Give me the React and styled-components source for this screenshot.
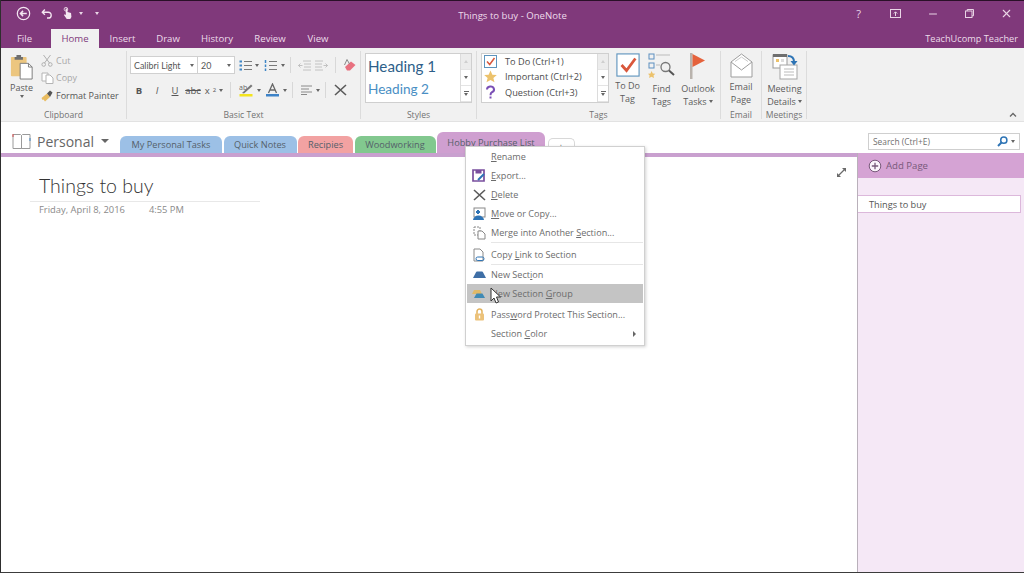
import React from 'react'
import styled, { createGlobalStyle } from 'styled-components'
import { FiX, FiMinus } from 'react-icons/fi'

const Global = createGlobalStyle`
  html, body { margin: 0; padding: 0; overflow: hidden; background: #fff; }
  * { box-sizing: border-box; }
  body { font-family: "Open Sans", "Noto Sans", sans-serif; }
`

const Win = styled.div`
  position: relative;
  width: 1024px;
  height: 573px;
  display: flex;
  flex-direction: column;
  overflow: hidden;
  border-left: 1px solid #2e2e2e;
  border-bottom: 1px solid #3c3c3c;
`

const TitleBar = styled.div`
  height: 29px;
  flex: none;
  background: #80397b;
  border-top: 1px solid #2a1028;
  color: #f1e2ef;
  display: grid;
  grid-template-columns: 1fr auto 1fr;
  align-items: center;
`
const Quick = styled.div`
  display: flex;
  align-items: center;
  padding: 0 0 3px 15px;
`
const QuickBtn = styled.span`
  display: flex;
  align-items: center;
  margin-left: ${p => p.$ml || 0}px;
`
const Title = styled.div`
  font-size: 9.6px;
  color: #eedcec;
`
const Controls = styled.div`
  display: flex;
  justify-content: flex-end;
  align-items: center;
  color: #e9d5e6;
  padding-bottom: 3px;
  margin-right: -1px;
`
const Ctl = styled.div`
  width: 37px;
  display: flex;
  justify-content: center;
  align-items: center;
  font-size: 11px;
`

const TabRow = styled.div`
  height: 19px;
  flex: none;
  background: #80397b;
  display: flex;
  align-items: stretch;
  padding-right: 6px;
`
const RTab = styled.div`
  width: ${p => p.$w}px;
  padding-right: ${p => p.$pr || 0}px;
  display: flex;
  justify-content: center;
  align-items: center;
  font-size: 9.6px;
  color: ${p => (p.$active ? '#80397b' : '#ecdcea')};
  background: ${p => (p.$active ? '#f1f1f1' : 'transparent')};
`
const Account = styled.div`
  margin-left: auto;
  font-size: 9.2px;
  display: flex;
  align-items: center;
  color: #ecdcea;
`

const Ribbon = styled.div`
  height: 74px;
  flex: none;
  background: #f1f1f1;
  border-bottom: 1px solid #e2e2e2;
  display: flex;
  color: #555;
`
const Group = styled.div`
  width: ${p => p.$w}px;
  flex: none;
  border-right: 1px solid #dcdcdc;
  margin: 3px 0 2px;
  display: flex;
  flex-direction: column;
`
const GroupBody = styled.div`
  flex: 1;
  display: flex;
  min-height: 0;
`
const GroupLabel = styled.div`
  height: 15px;
  flex: none;
  text-align: center;
  font-size: 8.6px;
  line-height: 22px;
  color: #727272;
`
const Paste = styled.div`
  width: 40px;
  flex: none;
  padding: 3px 0 0 1px;
  display: flex;
  flex-direction: column;
  align-items: center;
  gap: 1px;
  font-size: 9px;
  line-height: 12px;
  color: #5a5a5a;
`
const SmallCol = styled.div`
  display: flex;
  flex-direction: column;
  padding-top: 1px;
`
const SmallBtn = styled.div`
  height: 18px;
  display: flex;
  align-items: center;
  font-size: 9px;
  white-space: nowrap;
  color: ${p => (p.$off ? '#a8a8a8' : '#555')};
`
const SmallIcon = styled.span`
  width: 15px;
  flex: none;
  display: flex;
  align-items: center;
`
const BasicCol = styled.div`
  padding: 5px 0 0 3px;
  display: flex;
  flex-direction: column;
  gap: 7px;
`
const ToolRow = styled.div`
  display: flex;
  align-items: center;
  height: 18px;
`
const Field = styled.div`
  width: ${p => p.$w}px;
  height: 18px;
  background: #fff;
  border: 1px solid #d0d0d0;
  margin-left: ${p => (p.$joined ? '-1px' : '0')};
  display: flex;
  align-items: center;
  justify-content: space-between;
  font-size: 8.9px;
  font-family: "Lato", sans-serif;
  padding: 0 3px;
  color: #555;
`
const Caret = styled.span`
  display: inline-block;
  width: 0;
  height: 0;
  border-left: 2.5px solid transparent;
  border-right: 2.5px solid transparent;
  border-top: 3px solid ${p => p.$c || '#666'};
  flex: none;
`
const BigCaret = styled(Caret)`
  margin-left: 1px;
  border-left-width: 4px;
  border-right-width: 4px;
  border-top-width: 4px;
`
const UpCaret = styled(Caret)`
  border-top: none;
  border-bottom: 3px solid #cfcfcf;
`
const MoreCaret = styled.span`
  display: inline-block;
  width: 5px;
  height: 5px;
  border-top: 1px solid #666;
  position: relative;
  &::after {
    content: '';
    position: absolute;
    left: 0;
    top: 1px;
    border-left: 2.5px solid transparent;
    border-right: 2.5px solid transparent;
    border-top: 3px solid #666;
  }
`
const Sep = styled.div`
  width: 1px;
  height: 16px;
  background: #d8d8d8;
  margin: 0 ${p => p.$m || 5}px;
  flex: none;
`
const Tool = styled.div`
  width: ${p => p.$w || 18}px;
  height: 18px;
  flex: none;
  display: flex;
  align-items: center;
  justify-content: center;
  gap: 3px;
  font-size: 9.5px;
  color: #555;
`
const Gallery = styled.div`
  width: ${p => p.$w}px;
  height: 50px;
  margin: 2px 0 0 ${p => p.$ml}px;
  background: #fff;
  border: 1px solid #cfcfcf;
  display: flex;
`
const GalleryList = styled.div`
  flex: 1;
  display: flex;
  flex-direction: column;
  justify-content: space-around;
  padding-bottom: 2px;
`
const GalleryBtns = styled.div`
  width: 11px;
  border-left: 1px solid #dcdcdc;
  display: flex;
  flex-direction: column;
`
const GalleryBtn = styled.div`
  flex: 1;
  background: ${p => (p.$dim ? '#ececec' : '#fff')};
  border-bottom: 1px solid #e4e4e4;
  display: flex;
  align-items: center;
  justify-content: center;
`
const Heading = styled.div`
  font-family: "Lato", sans-serif;
  font-size: ${p => p.$s}px;
  color: ${p => p.$c};
  padding-left: 2px;
  line-height: 22px;
`
const TagLine = styled.div`
  display: flex;
  align-items: center;
  height: 16px;
  font-size: 9.2px;
  color: #4c4c4c;
  padding-left: 2px;
`
const TagIcon = styled.span`
  width: 20px;
  flex: none;
  display: flex;
  align-items: center;
`
const TagText = styled.span`
  margin-left: 1px;
`
const BigBtn = styled.div`
  width: ${p => p.$w}px;
  flex: none;
  display: flex;
  flex-direction: column;
  align-items: center;
  padding-top: 2px;
  font-size: 9px;
  line-height: 13px;
  color: #5c5c5c;
  text-align: center;
  white-space: nowrap;
`
const BigIcon = styled.div`
  height: 28px;
  display: flex;
  align-items: center;
  justify-content: center;
  margin-bottom: 2px;
`
const BtnLine = styled.div`
  display: flex;
  align-items: center;
  gap: 2px;
`
const Collapse = styled.div`
  margin-left: auto;
  align-self: flex-end;
  display: flex;
  padding: 0 7px 4px 0;
`

const SectionBar = styled.div`
  height: 35px;
  flex: none;
  background: #fff;
  display: flex;
  align-items: flex-end;
  border-bottom: 4px solid #c9a0cf;
  position: relative;
`
const Notebook = styled.div`
  width: 119px;
  height: 24px;
  flex: none;
  display: flex;
  align-items: center;
  padding-left: 11px;
  gap: 6px;
  font-size: 14px;
  color: #666;
`
const Tabs = styled.div`
  display: flex;
  align-items: flex-end;
  gap: 1.5px;
`
const SecTab = styled.div`
  width: ${p => p.$w}px;
  height: ${p => (p.$active ? 21 : 17)}px;
  background: ${p => p.$c};
  border-radius: 6px 6px 0 0;
  display: flex;
  justify-content: center;
  align-items: center;
  font-size: 9.2px;
  color: #55606a;
  white-space: nowrap;
`
const AddTab = styled.div`
  width: 27px;
  height: 15px;
  margin-left: 1px;
  border: 1px solid #d8d8d8;
  border-bottom: none;
  border-radius: 5px 5px 0 0;
  background: #fff;
  display: flex;
  justify-content: center;
  align-items: center;
  font-size: 11px;
  line-height: 11px;
  color: #777;
`
const Search = styled.div`
  position: absolute;
  left: 867px;
  top: 11px;
  width: 152px;
  height: 17px;
  background: #fff;
  border: 1px solid #cfcfcf;
  display: flex;
  align-items: center;
  justify-content: space-between;
  padding: 0 4px;
  font-size: 8.4px;
  color: #707070;
`
const SearchIcons = styled.span`
  display: flex;
  align-items: center;
  gap: 3px;
`

const Body = styled.div`
  flex: 1;
  display: flex;
  min-height: 0;
`
const Page = styled.div`
  flex: 1;
  padding: 17px 0 0 29px;
  position: relative;
`
const PageTitle = styled.div`
  font-family: "Lato", sans-serif;
  font-weight: 300;
  font-size: 19.5px;
  line-height: 24px;
  color: #333;
  padding-left: 9px;
  width: 230px;
  height: 28px;
  border-bottom: 1px solid #e8e8e8;
`
const Stamp = styled.div`
  display: flex;
  gap: 24px;
  padding: 1px 0 0 9px;
  font-size: 9.4px;
  color: #8a8a8a;
`
const Expand = styled.div`
  position: absolute;
  left: 835px;
  top: 4px;
  color: #666;
`
const PagesPane = styled.div`
  width: 167px;
  flex: none;
  margin-top: -4px;
  background: #f5e8f6;
  border-left: 1px solid #b9b0ba;
  display: flex;
  flex-direction: column;
  position: relative;
`
const AddPage = styled.div`
  height: 25px;
  background: #d5a3d4;
  display: flex;
  align-items: center;
  gap: 4px;
  padding-left: 10px;
  font-size: 9.6px;
  color: #77597a;
`
const PageRow = styled.div`
  margin: 17px 3px 0 0;
  height: 18px;
  background: #fff;
  border: 1px solid #dcb8db;
  border-left: none;
  display: flex;
  align-items: center;
  padding-left: 11px;
  font-size: 9.2px;
  color: #555;
`

const Menu = styled.div`
  position: absolute;
  left: 464px;
  top: 146px;
  width: 180px;
  height: 200px;
  background: #fff;
  border: 1px solid #d0d0d0;
  box-shadow: 1px 1px 3px rgba(0, 0, 0, 0.18);
  padding: 0 1px;
  display: flex;
  flex-direction: column;
`
const Item = styled.div`
  height: 19px;
  margin-top: ${p => p.$mt || 0}px;
  flex: none;
  display: flex;
  align-items: center;
  background: ${p => (p.$hover ? '#c4c4c4' : 'transparent')};
  font-size: 9.1px;
  color: #6c6c6c;
  position: relative;
  white-space: nowrap;
`
const ItemIcon = styled.span`
  width: 24px;
  flex: none;
  display: flex;
  align-items: center;
  justify-content: center;
`
const MenuSep = styled.div`
  height: 1px;
  flex: none;
  margin-left: 24px;
  background: #e6e6e6;
`
const Arrow = styled.span`
  position: absolute;
  right: 7px;
  width: 0;
  height: 0;
  border-top: 3px solid transparent;
  border-bottom: 3px solid transparent;
  border-left: 3px solid #666;
`
const Pointer = styled.svg`
  position: absolute;
  left: 489px;
  top: 287px;
`

const BackIcon = () => (
  <svg width="15" height="15" viewBox="0 0 16 16" fill="none" stroke="#f3e6f1" strokeWidth="1.3">
    <circle cx="8" cy="8" r="6.6" />
    <path d="M11.5 8H5M7.5 5.2 4.8 8l2.7 2.8" strokeWidth="1.6" />
  </svg>
)
const UndoIcon = () => (
  <svg width="12" height="13" viewBox="0 0 14 14" fill="none" stroke="#f3e6f1" strokeWidth="1.6">
    <path d="M1.5 5.5h7a3.4 3.4 0 0 1 0 6.8H7M4.5 2.3 1.5 5.5l3 3" />
  </svg>
)
const TouchIcon = () => (
  <svg width="11" height="15" viewBox="0 0 14 16" fill="#f3e6f1">
    <path d="M4.5 1.500h2.500v4.500l4.500 1.500.5 5-1.500 2.500H6L2.500 10l1-1 1.500 1z" />
    <circle cx="5" cy="2.500" r="2.300" fill="none" stroke="#f3e6f1" />
  </svg>
)
const PasteIcon = () => (
  <svg width="24" height="27" viewBox="0 0 26 29">
    <rect x="1" y="3" width="17" height="21" rx="1" fill="#ecc67f" />
    <path d="M5 3h9v3H5zM7 1h5v2H7z" fill="#6f6f6f" />
    <path d="M11 10h9l4 4v13H11z" fill="#fff" stroke="#777" />
    <path d="M20 10v4h4" fill="none" stroke="#777" />
  </svg>
)
const CutIcon = () => (
  <svg width="12" height="13" viewBox="0 0 12 13" fill="none" stroke="#b0b0b0">
    <path d="M2.500 1 8.500 9M9.500 1 3.500 9" />
    <circle cx="2.700" cy="10.500" r="1.800" />
    <circle cx="9.300" cy="10.500" r="1.800" />
  </svg>
)
const CopyIcon = () => (
  <svg width="13" height="12" viewBox="0 0 13 12" fill="#fff" stroke="#b4b4b4">
    <path d="M1 1h6v8H1z" />
    <path d="M5 3h4l3 3v5.500H5z" />
  </svg>
)
const BrushIcon = () => (
  <svg width="13" height="13" viewBox="0 0 13 13">
    <path d="M0.500 9 6 4.500 9 8 4 12.500 2.500 10.500 1.500 11z" fill="#e9bc60" />
    <path d="M6 4.500 9 1.500 11.500 3.500 9 8z" fill="#555" />
  </svg>
)
const BulletIcon = ({ num }) => (
  <svg width="13" height="13" viewBox="0 0 13 13" stroke="#7a7a7a">
    <path d="M5 2.500h8M5 6.500h8M5 10.500h8" />
    {num
      ? <path d="M1.500 1v3M1.500 5.500v2.500M1.500 9.500v2.500" stroke="#3f86c6" strokeWidth="1.500" />
      : <path d="M0.500 2.500h2.500M0.500 6.500h2.500M0.500 10.500h2.500" stroke="#3f86c6" strokeWidth="2.200" />}
  </svg>
)
const IndentIcon = ({ flip }) => (
  <svg width="13" height="11" viewBox="0 0 13 11" stroke="#c2c2c2" style={{ transform: flip ? 'scaleX(-1)' : 'none' }}>
    <path d="M5 1h8M6 4h7M6 7h7M5 10h8M0 5.500h4.500" />
    <path d="M2.500 3.500 0.500 5.500l2 2" fill="none" />
  </svg>
)
const EraserIcon = () => (
  <svg width="14" height="14" viewBox="0 0 14 14">
    <path d="M2 9 8 3.500l4.500 3.500L7 12.500H4z" fill="#e8707f" />
    <path d="M4 1.500 1.500 7M4 1.500 6.500 6" stroke="#888" fill="none" />
  </svg>
)
const HighlightIcon = () => (
  <svg width="15" height="14" viewBox="0 0 15 14">
    <text x="0" y="7" fontSize="7" fontFamily="Open Sans, sans-serif" fill="#666">ab</text>
    <path d="M3 10 12 1.500l1.500 1.500L5 10.500z" fill="#777" />
    <rect x="0.500" y="11" width="13" height="2.500" fill="#f4e41d" />
  </svg>
)
const FontColorIcon = () => (
  <svg width="13" height="14" viewBox="0 0 13 14" fill="none">
    <path d="M2.500 10 6.500 1l4 9M4 7h5" stroke="#666" strokeWidth="1.300" />
    <rect x="0" y="11" width="13" height="2.500" fill="#3e83c8" />
  </svg>
)
const AlignIcon = () => (
  <svg width="12" height="10" viewBox="0 0 12 10" stroke="#8a8a8a">
    <path d="M0 1h11M0 4h8M0 7h11M0 9.500h6" />
  </svg>
)
const CheckBox = ({ size = 13 }) => (
  <svg width={size} height={size} viewBox="0 0 13 13">
    <rect x="0.500" y="0.500" width="12" height="12" fill="#fff" stroke="#5d93bd" strokeWidth={size > 13 ? 0.6 : 1} />
    <path d="M3 6.500 5.700 9.500 10.500 3" fill="none" stroke="#d9573b" strokeWidth="1.500" />
  </svg>
)
const StarIcon = ({ size = 13 }) => (
  <svg width={size} height={size} viewBox="0 0 14 14">
    <path d="M7 0.500 9 5l4.800.400-3.700 3.100 1.200 4.800L7 10.700 2.700 13.300l1.200-4.800L.2 5.400 5 5z" fill="#ecc26c" />
  </svg>
)
const FindTagsIcon = () => (
  <svg width="27" height="27" viewBox="0 0 27 27" fill="none">
    <rect x="1" y="1" width="5" height="5" stroke="#5d8fc0" />
    <path d="M8 2h14" stroke="#bbb" />
    <rect x="1" y="10" width="5" height="5" stroke="#5d8fc0" />
    <path d="M8 12h4" stroke="#bbb" />
    <path d="M3.500 18l1.300 2.500 2.500.300-1.800 1.700.500 2.500-2.500-1.200-2.400 1.200.5-2.500L0 20.800l2.500-.3z" fill="#ecc26c" />
    <circle cx="17.500" cy="14" r="4.500" stroke="#777" strokeWidth="1.300" />
    <path d="M21 17.500 26 22" stroke="#555" strokeWidth="2" />
  </svg>
)
const FlagIcon = () => (
  <svg width="22" height="27" viewBox="0 0 22 27">
    <rect x="3" y="0" width="2.500" height="26" fill="#b9b3ad" />
    <path d="M5.500 1 18 7.500 5.500 14z" fill="#e5623c" />
  </svg>
)
const MailIcon = () => (
  <svg width="23" height="25" viewBox="0 0 23 25" fill="#fff" stroke="#9d9d9d">
    <path d="M1 9 11.500 1 22 9v15H1z" />
    <path d="M1 9l10.500 8L22 9" />
    <path d="M5 8.500 11.500 4l6.500 4.500" stroke="#ccc" fill="none" />
  </svg>
)
const MeetingIcon = () => (
  <svg width="26" height="27" viewBox="0 0 26 27">
    <rect x="1" y="2" width="14" height="13" fill="#fff" stroke="#999" />
    <rect x="1" y="1" width="14" height="3" fill="#6f6f6f" />
    <rect x="4" y="6" width="3" height="3" fill="#ecc26c" />
    <rect x="9" y="6" width="3" height="3" fill="#ddd" />
    <rect x="8" y="12" width="17" height="14" fill="#fff" stroke="#a5a5a5" />
    <path d="M12 16h10M12 19h10M12 22h10" stroke="#bbb" />
    <path d="M16 3c4 0 6 2 6 6" fill="none" stroke="#2e74b5" strokeWidth="2" />
    <path d="M18.500 8h7L22 12.500z" fill="#2e74b5" />
  </svg>
)
const BookIcon = () => (
  <svg width="19" height="17" viewBox="0 0 19 17" fill="#fff" stroke="#9a9a9a">
    <path d="M1 1.500h7.500l1 1v13h-8.500zM9.500 2.500l1-1H18v14H9.500z" />
    <path d="M1 1v3" stroke="#d94b4b" />
    <path d="M18 5v3" stroke="#3f86c6" />
  </svg>
)
const Lens = () => (
  <svg width="11" height="11" viewBox="0 0 11 11" fill="none" stroke="#2e74b5" strokeWidth="1.500">
    <circle cx="6.800" cy="4.200" r="3.100" />
    <path d="M4.500 6.500 1 10" strokeWidth="2" />
  </svg>
)
const ExpandIcon = () => (
  <svg width="11" height="11" viewBox="0 0 11 11" stroke="#6a6a6a" fill="#6a6a6a">
    <path d="M2.500 8.500 8.500 2.500" strokeWidth="1.200" />
    <path d="M6 1h4v4zM1 6v4h4z" stroke="none" />
  </svg>
)
const PlusCircle = () => (
  <svg width="14" height="14" viewBox="0 0 14 14" fill="#fbf5fb" stroke="#77597a">
    <circle cx="7" cy="7" r="5.800" />
    <path d="M7 3.800v6.400M3.800 7h6.400" strokeWidth="1.300" />
  </svg>
)
const ExportIcon = () => (
  <svg width="14" height="13" viewBox="0 0 14 13">
    <path d="M1 1h11v11H1z" fill="#fff" stroke="#7a4f9e" strokeWidth="1.700" />
    <rect x="3.500" y="1" width="6" height="3.500" fill="#7a4f9e" />
    <path d="M6 11 12 5" stroke="#2e74b5" strokeWidth="2" />
  </svg>
)
const DeleteIcon = () => (
  <svg width="13" height="12" viewBox="0 0 13 12" stroke="#5a5a5a" strokeWidth="1.600">
    <path d="M1 1l11 10M12 1 1 11" />
  </svg>
)
const MoveIcon = () => (
  <svg width="14" height="14" viewBox="0 0 14 14">
    <rect x="2" y="1" width="11" height="9" fill="#fff" stroke="#888" />
    <path d="M4 5h4M6 3v4" stroke="#2e74b5" strokeWidth="2" />
    <path d="M1 13a5 4 0 0 1 11 0z" fill="#2e74b5" />
  </svg>
)
const MergeIcon = () => (
  <svg width="13" height="14" viewBox="0 0 13 14" fill="#fff" stroke="#888">
    <path d="M1 1h6v8H1z" strokeDasharray="2 1" />
    <path d="M5 5h4l3 3v5H5z" />
  </svg>
)
const LinkIcon = () => (
  <svg width="12" height="14" viewBox="0 0 12 14">
    <path d="M1 1h6l3 3v9H1z" fill="#fff" stroke="#8a8a8a" />
    <rect x="3" y="9" width="8" height="3.500" rx="1.700" fill="none" stroke="#2e74b5" />
  </svg>
)
const SectionIcon = () => (
  <svg width="13" height="7" viewBox="0 0 13 7">
    <path d="M0 7 3 1.200Q3.300 .5 4 .5h5q.7 0 1 .7L13 7z" fill="#3f6fa6" />
  </svg>
)
const GroupIcon = () => (
  <svg width="14" height="9" viewBox="0 0 14 9">
    <path d="M0 5 2 1h6l2 4z" fill="#e0b968" />
    <path d="M2 9l2.500-4.500h6L13 9z" fill="#3f8ab5" />
  </svg>
)
const LockIcon = () => (
  <svg width="11" height="13" viewBox="0 0 11 13" fill="none">
    <path d="M3 6V3.500a2.500 2.500 0 0 1 5 0V6" stroke="#e3b35e" strokeWidth="1.500" />
    <rect x="1" y="5.500" width="9" height="7" rx="1" fill="#ecc27a" />
    <rect x="4.800" y="7.500" width="1.400" height="3" fill="#fff" />
  </svg>
)

function App() {
  return (
    <Win>
      <Global />
      <TitleBar>
        <Quick>
          <BackIcon />
          <QuickBtn $ml={10}><UndoIcon /></QuickBtn>
          <QuickBtn $ml={9}><TouchIcon /></QuickBtn>
          <QuickBtn $ml={6}><Caret $c="#e9d5e6" /></QuickBtn>
          <QuickBtn $ml={12}><Caret $c="#e9d5e6" /></QuickBtn>
        </Quick>
        <Title>Things to buy - OneNote</Title>
        <Controls>
          <Ctl>?</Ctl>
          <Ctl>
            <svg width="11" height="9" viewBox="0 0 11 9" fill="none" stroke="#e9d5e6">
              <rect x="0.500" y="0.500" width="10" height="8" />
              <path d="M5.500 7V3M3.800 4.500 5.500 2.800l1.700 1.700" />
            </svg>
          </Ctl>
          <Ctl><FiMinus size={12} /></Ctl>
          <Ctl>
            <svg width="9" height="9" viewBox="0 0 9 9" fill="none" stroke="#e9d5e6">
              <rect x="0.500" y="2" width="6.500" height="6.500" />
              <path d="M2.200 2V.5h6.300v6.300H7" />
            </svg>
          </Ctl>
          <Ctl><FiX size={13} /></Ctl>
        </Controls>
      </TitleBar>

      <TabRow>
        <RTab $w={50} $pr={3}>File</RTab>
        <RTab $w={48} $active>Home</RTab>
        <RTab $w={47}>Insert</RTab>
        <RTab $w={44}>Draw</RTab>
        <RTab $w={54}>History</RTab>
        <RTab $w={52}>Review</RTab>
        <RTab $w={44}>View</RTab>
        <Account>TeachUcomp Teacher</Account>
      </TabRow>

      <Ribbon>
        <Group $w={126}>
          <GroupBody>
            <Paste>
              <PasteIcon />
              Paste
              <Caret />
            </Paste>
            <SmallCol>
              <SmallBtn $off><SmallIcon><CutIcon /></SmallIcon>Cut</SmallBtn>
              <SmallBtn $off><SmallIcon><CopyIcon /></SmallIcon>Copy</SmallBtn>
              <SmallBtn><SmallIcon><BrushIcon /></SmallIcon>Format Painter</SmallBtn>
            </SmallCol>
          </GroupBody>
          <GroupLabel>Clipboard</GroupLabel>
        </Group>

        <Group $w={234}>
          <GroupBody>
            <BasicCol>
              <ToolRow>
                <Field $w={68}>Calibri Light <Caret /></Field>
                <Field $w={38} $joined>20 <Caret /></Field>
                <Tool $w={20}><BulletIcon /></Tool>
                <Caret />
                <Tool $w={22}><BulletIcon num /></Tool>
                <Caret />
                <Sep />
                <Tool $w={17}><IndentIcon /></Tool>
                <Tool $w={17}><IndentIcon flip /></Tool>
                <Sep />
                <Tool $w={17}><EraserIcon /></Tool>
              </ToolRow>
              <ToolRow>
                <Tool><b>B</b></Tool>
                <Tool><i>I</i></Tool>
                <Tool><u>U</u></Tool>
                <Tool><s>abc</s></Tool>
                <Tool $w={24}>x<sub style={{ fontSize: 6 }}>2</sub><Caret /></Tool>
                <Sep $m={4} />
                <Tool $w={22}><HighlightIcon /></Tool>
                <Caret />
                <Tool $w={22}><FontColorIcon /></Tool>
                <Caret />
                <Sep />
                <Tool $w={24}><AlignIcon /><Caret /></Tool>
                <Sep $m={3} />
                <Tool $w={22}><DeleteIcon /></Tool>
              </ToolRow>
            </BasicCol>
          </GroupBody>
          <GroupLabel>Basic Text</GroupLabel>
        </Group>

        <Group $w={116}>
          <GroupBody>
            <Gallery $w={107} $ml={4}>
              <GalleryList>
                <Heading $s={15.2} $c="#2e5f8a">Heading 1</Heading>
                <Heading $s={13.6} $c="#4a8fc4">Heading 2</Heading>
              </GalleryList>
              <GalleryBtns>
                <GalleryBtn $dim><UpCaret /></GalleryBtn>
                <GalleryBtn><Caret /></GalleryBtn>
                <GalleryBtn><MoreCaret /></GalleryBtn>
              </GalleryBtns>
            </Gallery>
          </GroupBody>
          <GroupLabel>Styles</GroupLabel>
        </Group>

        <Group $w={244}>
          <GroupBody>
            <Gallery $w={128} $ml={4}>
              <GalleryList>
                <TagLine><TagIcon><CheckBox /></TagIcon><TagText>To Do (Ctrl+1)</TagText></TagLine>
                <TagLine><TagIcon><StarIcon /></TagIcon><TagText>Important (Ctrl+2)</TagText></TagLine>
                <TagLine>
                  <TagIcon>
                    <svg width="13" height="14" viewBox="0 0 13 14" fill="none" stroke="#7a4fb5" strokeWidth="2">
                      <path d="M3 4.500a3.500 3 0 1 1 5 2.700c-1.300.8-1.500 1.300-1.500 3" />
                      <path d="M6.500 11.500v2" />
                    </svg>
                  </TagIcon>
                  <TagText>Question (Ctrl+3)</TagText>
                </TagLine>
              </GalleryList>
              <GalleryBtns>
                <GalleryBtn $dim><UpCaret /></GalleryBtn>
                <GalleryBtn><Caret /></GalleryBtn>
                <GalleryBtn><MoreCaret /></GalleryBtn>
              </GalleryBtns>
            </Gallery>
            <BigBtn $w={37}><BigIcon><CheckBox size={24} /></BigIcon>To Do<br />Tag</BigBtn>
            <BigBtn $w={31}><BigIcon><FindTagsIcon /></BigIcon>Find<br />Tags</BigBtn>
            <BigBtn $w={42}>
              <BigIcon><FlagIcon /></BigIcon>
              Outlook
              <BtnLine>Tasks <Caret /></BtnLine>
            </BigBtn>
          </GroupBody>
          <GroupLabel>Tags</GroupLabel>
        </Group>

        <Group $w={41}>
          <GroupBody>
            <BigBtn $w={40}><BigIcon><MailIcon /></BigIcon>Email<br />Page</BigBtn>
          </GroupBody>
          <GroupLabel>Email</GroupLabel>
        </Group>

        <Group $w={45}>
          <GroupBody>
            <BigBtn $w={45}>
              <BigIcon><MeetingIcon /></BigIcon>
              Meeting
              <BtnLine>Details <Caret /></BtnLine>
            </BigBtn>
          </GroupBody>
          <GroupLabel>Meetings</GroupLabel>
        </Group>

        <Collapse>
          <svg width="8" height="5" viewBox="0 0 8 5" fill="none" stroke="#666" strokeWidth="1.300">
            <path d="M1 4.500 4 1.500l3 3" />
          </svg>
        </Collapse>
      </Ribbon>

      <SectionBar>
        <Notebook>
          <BookIcon />
          Personal
          <BigCaret $c="#666" />
        </Notebook>
        <Tabs>
          <SecTab $w={102} $c="#9cc0e6">My Personal Tasks</SecTab>
          <SecTab $w={73} $c="#9cc0e6">Quick Notes</SecTab>
          <SecTab $w={55} $c="#f2a2a2">Recipies</SecTab>
          <SecTab $w={81} $c="#82c88f">Woodworking</SecTab>
          <SecTab $w={108} $c="#cf9fd0" $active>Hobby Purchase List</SecTab>
          <AddTab>+</AddTab>
        </Tabs>
        <Search>
          Search (Ctrl+E)
          <SearchIcons><Lens /><Caret /></SearchIcons>
        </Search>
      </SectionBar>

      <Body>
        <Page>
          <PageTitle>Things to buy</PageTitle>
          <Stamp>
            <span>Friday, April 8, 2016</span>
            <span>4:55 PM</span>
          </Stamp>
          <Expand><ExpandIcon /></Expand>
        </Page>
        <PagesPane>
          <AddPage><PlusCircle /> Add Page</AddPage>
          <PageRow>Things to buy</PageRow>
        </PagesPane>
      </Body>

      <Menu>
        <Item><ItemIcon /><span><u>R</u>ename</span></Item>
        <Item><ItemIcon><ExportIcon /></ItemIcon><span><u>E</u>xport...</span></Item>
        <Item><ItemIcon><DeleteIcon /></ItemIcon><span><u>D</u>elete</span></Item>
        <Item><ItemIcon><MoveIcon /></ItemIcon><span><u>M</u>ove or Copy...</span></Item>
        <Item><ItemIcon><MergeIcon /></ItemIcon><span>Merge into Another <u>S</u>ection...</span></Item>
        <MenuSep />
        <Item $mt={2}><ItemIcon><LinkIcon /></ItemIcon><span>Copy <u>L</u>ink to Section</span></Item>
        <MenuSep />
        <Item><ItemIcon><SectionIcon /></ItemIcon><span>New Sect<u>i</u>on</span></Item>
        <Item $hover><ItemIcon><GroupIcon /></ItemIcon><span>New Section <u>G</u>roup</span></Item>
        <Item $mt={2}><ItemIcon><LockIcon /></ItemIcon><span>Pass<u>w</u>ord Protect This Section...</span></Item>
        <Item><ItemIcon /><span>Section <u>C</u>olor</span><Arrow /></Item>
      </Menu>
      <Pointer width="12" height="17" viewBox="0 0 12 17">
        <path d="M1 1v13l3-3 2 5 2.500-1-2-5h4z" fill="#fff" stroke="#333" strokeWidth="1" />
      </Pointer>
    </Win>
  )
}

export default App
